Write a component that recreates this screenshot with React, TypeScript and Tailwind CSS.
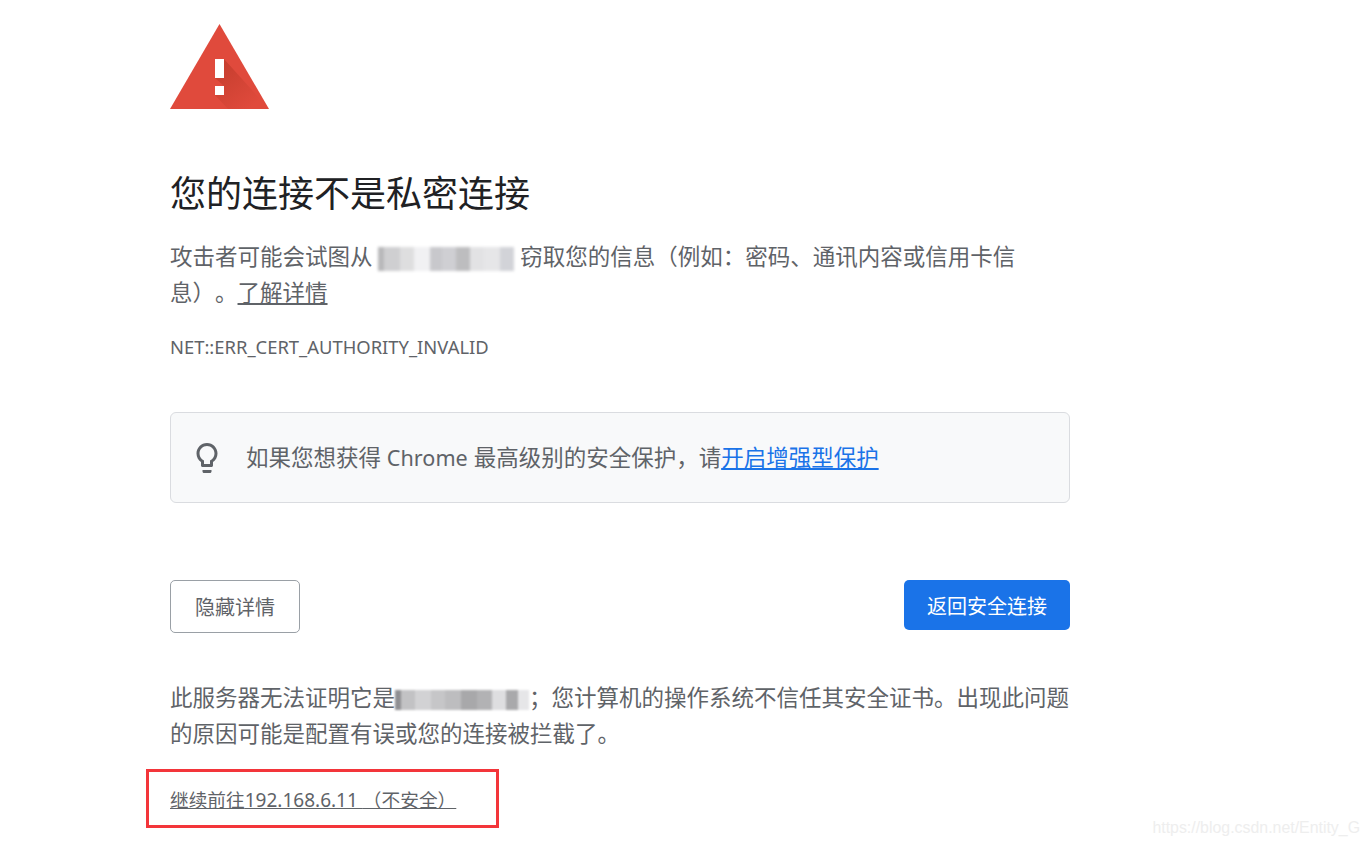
const first = [
  ["w-[6px]", "bg-[#b8b8ba]"], ["w-[16px]", "bg-[#cfcfd1]"], ["w-[14px]", "bg-[#dededf]"], ["w-[16px]", "bg-[#f1f1f3]"],
  ["w-[12px]", "bg-[#c8c8cc]"], ["w-[14px]", "bg-[#cfcfd3]"], ["w-[14px]", "bg-[#bdbdbf]"], ["w-[14px]", "bg-[#e2e2e4]"],
  ["w-[16px]", "bg-[#e6e6e8]"], ["w-[14px]", "bg-[#d2d3d8]"],
];
const second = [
  ["w-[6px]", "bg-[#8f8f92]"], ["w-[14px]", "bg-[#c2c2c4]"], ["w-[16px]", "bg-[#d2d2d4]"], ["w-[14px]", "bg-[#c6c6c8]"],
  ["w-[16px]", "bg-[#bdbdbf]"], ["w-[16px]", "bg-[#a8a8aa]"], ["w-[15px]", "bg-[#b2b2b4]"], ["w-[14px]", "bg-[#dedee0]"],
  ["w-[12px]", "bg-[#a9a9ab]"], ["w-[11px]", "bg-[#e6e6e8]"],
];

function Mosaic({ cells, className }: { cells: string[][]; className: string }) {
  return (
    <span className={`inline-flex align-middle ${className}`}>
      {cells.map(([w, c], i) => (
        <span key={i} className={`block h-full ${w} ${c}`} />
      ))}
    </span>
  );
}

export default function App() {
  return (
    <div className="relative h-[848px] w-[1367px] overflow-hidden bg-white font-['Noto_Sans','Noto_Sans_CJK_SC',sans-serif] text-[#5f6368] [text-spacing-trim:space-all]">
      <main className="ml-[170px] flex w-[900px] flex-col pt-[24px]">
        <svg width="99" height="85" viewBox="0 0 99 85" className="block">
          <defs>
            <linearGradient id="shade" x1="0.15" y1="0.1" x2="0.8" y2="0.85">
              <stop offset="0" stopColor="#a8301f" stopOpacity="0.45" />
              <stop offset="1" stopColor="#a8301f" stopOpacity="0" />
            </linearGradient>
          </defs>
          <polygon points="49.5,0 99,85 0,85" fill="#e04a3c" />
          <polygon points="54,35 99,85 58,85 45,71 54,71 54,62 45,54 54,54" fill="url(#shade)" />
          <rect x="45" y="35" width="9" height="19" fill="#fff" />
          <rect x="45" y="62" width="9" height="9" fill="#fff" />
        </svg>
        <h1 className="mt-[61px] text-[36px] leading-[48px] font-normal text-[#202124]">您的连接不是私密连接</h1>
        <p className="mt-[21px] h-[72px] max-w-[860px] text-[22.5px] leading-[36px]">
          攻击者可能会试图从 <Mosaic cells={first} className="h-[24px] w-[136px] rounded-full blur-[1.5px]" /> 窃取您的信息（例如：密码、通讯内容或信用卡信息）。<a className="underline">了解详情</a>
        </p>
        <p className="mt-[22px] text-[18.4px] leading-[28px]">NET::ERR_CERT_AUTHORITY_INVALID</p>
        <section className="mt-[51px] flex h-[91px] items-center rounded-[6px] border border-[#dadce0] bg-[#f8f9fa] pl-[18px] text-[22.5px]">
          <svg width="36" height="36" viewBox="0 0 24 24" fill="#5f6368" className="shrink-0">
            <path d="M9 21c0 .55.45 1 1 1h4c.55 0 1-.45 1-1v-1H9v1zm3-19C8.14 2 5 5.14 5 9c0 2.38 1.19 4.47 3 5.74V17c0 .55.45 1 1 1h6c.55 0 1-.45 1-1v-2.26c1.81-1.27 3-3.36 3-5.74 0-3.86-3.14-7-7-7zm2.85 11.1l-.85.6V16h-4v-2.3l-.85-.6C7.8 12.16 7 10.63 7 9c0-2.76 2.24-5 5-5s5 2.24 5 5c0 1.63-.8 3.16-2.15 4.1z" />
          </svg>
          <p className="ml-[21px]">
            如果您想获得 <span className="text-[21.6px]">Chrome</span> 最高级别的安全保护，请<a className="text-[#1a73e8] underline">开启增强型保护</a>
          </p>
        </section>
        <div className="mt-[77px] flex items-start justify-between">
          <button className="h-[53px] w-[130px] rounded-[5px] border border-[#9aa0a6] bg-white pt-[2px] text-[20px]">隐藏详情</button>
          <button className="h-[50px] w-[166px] rounded-[5px] bg-[#1a73e8] pt-[3px] text-[20px] text-white">返回安全连接</button>
        </div>
        <p className="mt-[47px] w-[906px] text-[22.5px] leading-[36px]">
          此服务器无法证明它是<Mosaic cells={second} className="h-[20px] w-[134px] blur-[1px]" />；您计算机的操作系统不信任其安全证书。出现此问题<br />的原因可能是配置有误或您的连接被拦截了。
        </p>
        <div className="mt-[17px] -ml-[24px] flex h-[59px] w-[353px] items-center border-[3px] border-[#f3353a] pt-[3px] pl-[21px]">
          <a className="text-[18.7px] underline">继续前往<span className="text-[19px]">192.168.6.1<span className="tracking-[5px]">1</span></span>（不安全）</a>
        </div>
      </main>
      <span className="absolute right-[7px] bottom-[8px] font-['Liberation_Sans',sans-serif] text-[15.9px] text-[#eeeeee]">https://blog.csdn.net/Entity_G</span>
    </div>
  );
}
